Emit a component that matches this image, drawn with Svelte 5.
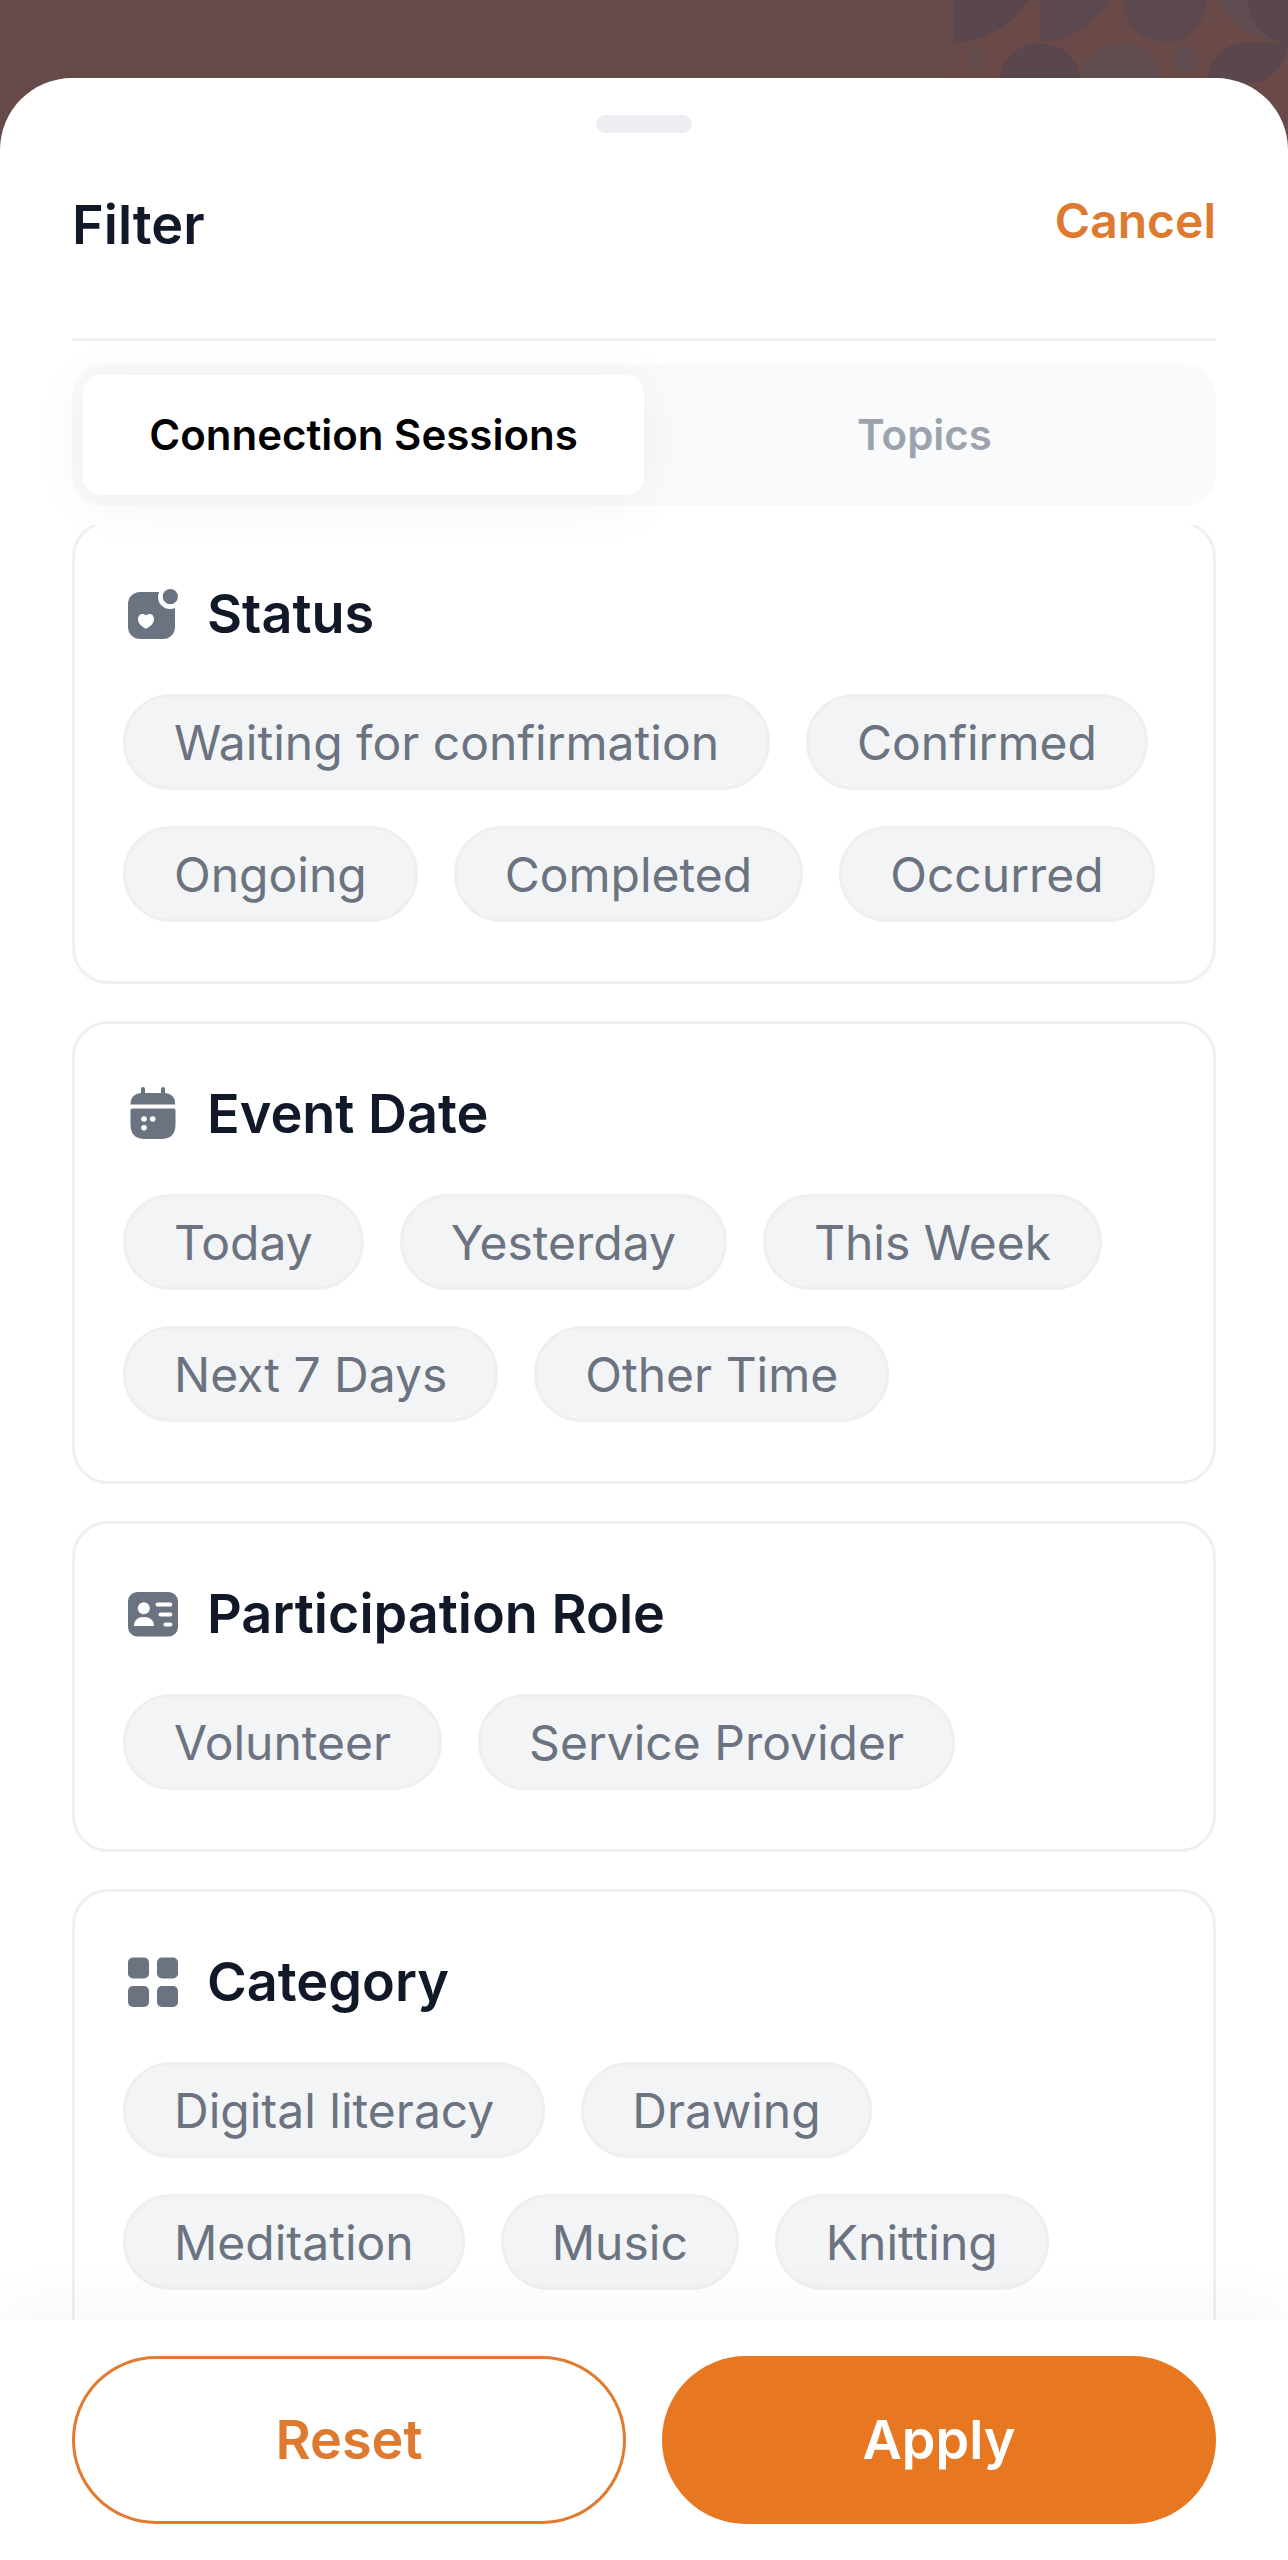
<script>
  const sections = [
    { icon: 'status', title: 'Status', options: ['Waiting for confirmation', 'Confirmed', 'Ongoing', 'Completed', 'Occurred'] },
    { icon: 'calendar', title: 'Event Date', options: ['Today', 'Yesterday', 'This Week', 'Next 7 Days', 'Other Time'] },
    { icon: 'role', title: 'Participation Role', options: ['Volunteer', 'Service Provider'] },
    { icon: 'grid', title: 'Category', options: ['Digital literacy', 'Drawing', 'Meditation', 'Music', 'Knitting'] }
  ];
  const tabs = ['Connection Sessions', 'Topics'];
  let activeTab = $state(0);
  let selected = $state({});
</script>

<div class="screen">
  <svg class="pattern" viewBox="0 0 333 180" aria-hidden="true">
    <rect width="333" height="180" fill="#6a4a48" />
    <path d="M0 0H73A84 84 0 0 1 0 42Z" fill="#5a464d" />
    <path d="M85 0H155A84 84 0 0 1 85 42Z" fill="#5c494f" />
    <circle cx="210" cy="0" r="42" fill="#5c494f" />
    <path d="M262 0A84 84 0 0 0 333 42V0Z" fill="#604d52" />
    <circle cx="336" cy="0" r="43" fill="#5a464d" />
    <circle cx="22" cy="60" r="11" fill="#654c4f" />
    <circle cx="85" cy="84" r="41" fill="#5a464d" />
    <circle cx="167" cy="84" r="41" fill="#624e51" />
    <circle cx="230" cy="60" r="13" fill="#624e51" />
    <path d="M251 84A42 42 0 0 1 293 42H333A42 42 0 0 1 291 84Z" fill="#5a464d" />
  </svg>

  <main class="sheet">
    <div class="handle"></div>
    <header>
      <h1>Filter</h1>
      <button class="cancel">Cancel</button>
    </header>

    <div class="tabs" role="tablist">
      {#each tabs as tab, i}
        <button role="tab" class="tab" class:active={activeTab === i} aria-selected={activeTab === i} onclick={() => (activeTab = i)}>{tab}</button>
      {/each}
    </div>

    <div class="scroll">
      <div class="list">
        {#each sections as section}
          <section>
            <h2>
              <svg viewBox="0 0 60 60" aria-hidden="true">
                {#if section.icon === 'status'}
                  <rect x="5" y="8" width="47" height="47" rx="12" />
                  <circle cx="47" cy="13" r="12" fill="#fff" />
                  <circle cx="47.3" cy="12.7" r="7.6" />
                  <path fill="#fff" d="M23 44.7C19 43 15 39.5 15 35C15 30 20 28.5 23 31.5C26 28.5 31 30 31 35C31 39.5 27 43 23 44.7Z" />
                {:else if section.icon === 'calendar'}
                  <rect x="18" y="3" width="4" height="12" rx="2" />
                  <rect x="38" y="3" width="4" height="12" rx="2" />
                  <path d="M7.5 20.5C7.5 13 12 9 19 9H41C48 9 52.2 13 52.2 20.5Z" />
                  <path d="M9 24.5H51Q52.5 24.5 52.5 26V40C52.5 50 48 55 38 55H22C12 55 7.5 50 7.5 40V26Q7.5 24.5 9 24.5Z" />
                  <g fill="#fff">
                    <circle cx="21" cy="35" r="2.8" /><circle cx="29.7" cy="35" r="2.8" /><circle cx="21" cy="43.7" r="2.8" />
                  </g>
                {:else if section.icon === 'role'}
                  <rect x="5" y="8" width="50" height="44.5" rx="9.5" />
                  <g fill="#fff">
                    <circle cx="20.8" cy="24.3" r="6" />
                    <path d="M11 42C11 36 15 33 20.8 33S31 36 31 42Z" />
                    <rect x="32.5" y="18.5" width="16.8" height="4" rx="2" />
                    <rect x="35.5" y="28.5" width="13.8" height="4" rx="2" />
                    <rect x="40.5" y="38.5" width="8.8" height="4" rx="2" />
                  </g>
                {:else}
                  <rect x="5" y="5.5" width="21" height="21" rx="5" />
                  <rect x="34" y="5.5" width="21" height="21" rx="5" />
                  <rect x="5" y="34" width="21" height="21" rx="5" />
                  <rect x="34" y="34" width="21" height="21" rx="5" />
                {/if}
              </svg>
              {section.title}
            </h2>
            <div class="chips">
              {#each section.options as option}
                <button class="chip" class:on={selected[option]} aria-pressed={!!selected[option]} onclick={() => (selected[option] = !selected[option])}>{option}</button>
              {/each}
            </div>
          </section>
        {/each}
      </div>
    </div>

    <footer>
      <button class="action" onclick={() => (selected = {})}>Reset</button>
      <button class="action primary">Apply</button>
    </footer>
  </main>
</div>

<style>
  :global(body) {
    margin: 0;
  }
  .screen {
    position: relative;
    box-sizing: border-box;
    height: 100vh;
    padding-top: 78px;
    background: #664a4a;
    font-family: Inter, 'Liberation Sans', sans-serif;
    overflow: hidden;
  }
  .pattern {
    position: absolute;
    top: 0;
    right: 0;
    width: 333px;
    height: 180px;
  }
  .sheet {
    position: relative;
    display: flex;
    flex-direction: column;
    height: 100%;
    background: #fff;
    border-radius: 72px 72px 0 0;
    overflow: hidden;
  }
  .handle {
    flex: none;
    align-self: center;
    width: 96px;
    height: 18px;
    margin-top: 37px;
    border-radius: 9px;
    background: #edeef2;
  }
  button {
    margin: 0;
    padding: 0;
    border: 0;
    background: none;
    font-family: inherit;
    cursor: pointer;
  }
  header {
    display: flex;
    justify-content: space-between;
    align-items: flex-start;
    margin: 60px 72px 0;
    padding-bottom: 81px;
    border-bottom: 3px solid #f0f0f2;
  }
  h1 {
    margin: 0;
    color: #111827;
    font-size: 54px;
    line-height: 64px;
    font-weight: 600;
  }
  .cancel {
    color: #de7930;
    font-size: 48px;
    line-height: 56px;
    font-weight: 600;
  }
  .tabs {
    display: grid;
    grid-template-columns: 1fr 1fr;
    margin: 23px 72px 0;
    padding: 11px;
    border-radius: 32px;
    background: #f9fafc;
  }
  .tab {
    height: 120px;
    padding-bottom: 2px;
    border-radius: 18px;
    color: #9ca3af;
    font-size: 42px;
    font-weight: 600;
  }
  .tab.active {
    background: #fff;
    color: #000;
    box-shadow: 0 6px 60px rgba(0, 0, 0, 0.05);
  }
  .scroll {
    flex: 1;
    min-height: 0;
    margin-top: 19px;
    overflow-y: auto;
    scrollbar-width: none;
  }
  .list {
    display: flex;
    flex-direction: column;
    gap: 37px;
    margin: -4px 72px 0;
  }
  section {
    padding: 54px 48px 59px;
    border: 3px solid #f0f0f2;
    border-radius: 36px;
  }
  h2 {
    display: flex;
    align-items: center;
    gap: 24px;
    margin: 0 0 44px;
    color: #111827;
    font-size: 54px;
    line-height: 72px;
    font-weight: 600;
  }
  h2 svg {
    width: 60px;
    height: 60px;
    fill: #6b7280;
  }
  .chips {
    display: flex;
    flex-wrap: wrap;
    gap: 36px;
  }
  .chip {
    height: 96px;
    padding: 0 48px;
    border: 3px solid #eeeff1;
    border-radius: 48px;
    background: #f3f4f6;
    color: #6b7280;
    font-size: 48px;
    white-space: nowrap;
  }
  .chip.on {
    border-color: #e87722;
    color: #e87722;
  }
  footer {
    position: relative;
    display: grid;
    grid-template-columns: 1fr 1fr;
    gap: 36px;
    padding: 36px 72px;
    background: #fff;
    box-shadow: 0 -12px 60px rgba(0, 0, 0, 0.04);
  }
  .action {
    height: 168px;
    padding-bottom: 2px;
    border: 3px solid #e07b30;
    border-radius: 84px;
    color: #de7930;
    font-size: 54px;
    font-weight: 600;
  }
  .primary {
    border-color: #e87722;
    background: #e87722;
    color: #fff;
  }
</style>
